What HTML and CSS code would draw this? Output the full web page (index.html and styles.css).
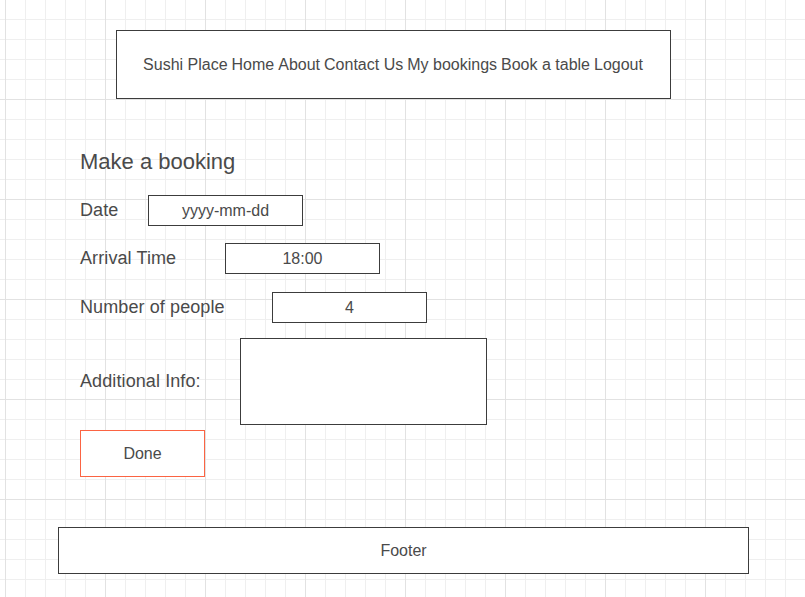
FILE: index.html
```html
<!DOCTYPE html>
<html lang="en">
<head>
<meta charset="utf-8">
<title>Sushi Place - Make a booking</title>
<link rel="stylesheet" href="styles.css">
</head>
<body>
  <nav class="topnav">
    <span>Sushi Place</span>
    <span>Home</span>
    <span>About</span>
    <span>Contact Us</span>
    <span>My bookings</span>
    <span>Book a table</span>
    <span>Logout</span>
  </nav>

  <main class="booking">
    <h1 class="title">Make a booking</h1>
    <form class="form">
      <div class="row row-date">
        <label class="label label-date" for="date">Date</label>
        <input class="field" id="date" type="text" value="yyyy-mm-dd">
      </div>
      <div class="row row-time">
        <label class="label label-time" for="time">Arrival Time</label>
        <input class="field" id="time" type="text" value="18:00">
      </div>
      <div class="row row-people">
        <label class="label label-people" for="people">Number of people</label>
        <input class="field" id="people" type="text" value="4">
      </div>
      <div class="row row-info">
        <label class="label label-info" for="info">Additional Info:</label>
        <textarea class="area" id="info"></textarea>
      </div>
      <button class="done" type="button">Done</button>
    </form>
  </main>

  <footer class="footer">Footer</footer>
</body>
</html>
```

FILE: styles.css
```css
html, body {
  margin: 0;
  padding: 0;
}

body {
  width: 805px;
  height: 597px;
  overflow: hidden;
  font-family: "Liberation Sans", Arial, sans-serif;
  color: #4a4a4a;
  background-color: #ffffff;
  background-image:
    linear-gradient(to right, #e2e2e2 1px, transparent 1px),
    linear-gradient(to bottom, #e2e2e2 1px, transparent 1px),
    linear-gradient(to right, #efefef 1px, transparent 1px),
    linear-gradient(to bottom, #efefef 1px, transparent 1px);
  background-size: 100px 100px, 100px 100px, 20px 20px, 20px 20px;
  background-position: 5px 0, 0 99px, 5px 0, 0 19px;
  padding-top: 30px;
  box-sizing: border-box;
}

.topnav {
  margin-left: 116px;
  width: 555px;
  height: 69px;
  box-sizing: border-box;
  border: 1px solid #3c3c3c;
  background: #ffffff;
  display: flex;
  align-items: center;
  justify-content: center;
  gap: 4px;
  font-size: 16px;
  padding-right: 1px;
}

.booking {
  padding-left: 80px;
  margin-top: 51px;
}

.title {
  margin: 0;
  font-size: 22px;
  line-height: 24px;
  font-weight: normal;
}

.form {
  margin: 21px 0 0;
  display: flex;
  flex-direction: column;
  align-items: flex-start;
}

.row {
  display: flex;
  align-items: center;
}

.row-time { margin-top: 17px; }
.row-people { margin-top: 18px; }
.row-info { margin-top: 15px; }

.label {
  font-size: 18px;
  line-height: 20px;
  padding-bottom: 2px;
  letter-spacing: 0.1px;
}

.label-date { width: 68px; }
.label-time { width: 145px; }
.label-people { width: 192px; }
.label-info { width: 160px; }

.field {
  width: 155px;
  height: 31px;
  box-sizing: border-box;
  border: 1px solid #3c3c3c;
  border-radius: 0;
  padding: 0;
  margin: 0;
  background: #ffffff;
  font-family: "Liberation Sans", Arial, sans-serif;
  font-size: 16px;
  color: #4a4a4a;
  text-align: center;
  outline: none;
}

.area {
  width: 247px;
  height: 87px;
  box-sizing: border-box;
  border: 1px solid #3c3c3c;
  border-radius: 0;
  padding: 0;
  margin: 0;
  background: #ffffff;
  resize: none;
  display: block;
  outline: none;
}

.done {
  margin-top: 5px;
  width: 125px;
  height: 47px;
  box-sizing: border-box;
  border: 1px solid #fb6443;
  border-radius: 0;
  background: #ffffff;
  font-family: "Liberation Sans", Arial, sans-serif;
  font-size: 16px;
  color: #4a4a4a;
  padding: 0;
  cursor: pointer;
}

.footer {
  margin: 50px 0 0 58px;
  width: 691px;
  height: 47px;
  box-sizing: border-box;
  border: 1px solid #3c3c3c;
  background: #ffffff;
  display: flex;
  align-items: center;
  justify-content: center;
  font-size: 16px;
}
```
